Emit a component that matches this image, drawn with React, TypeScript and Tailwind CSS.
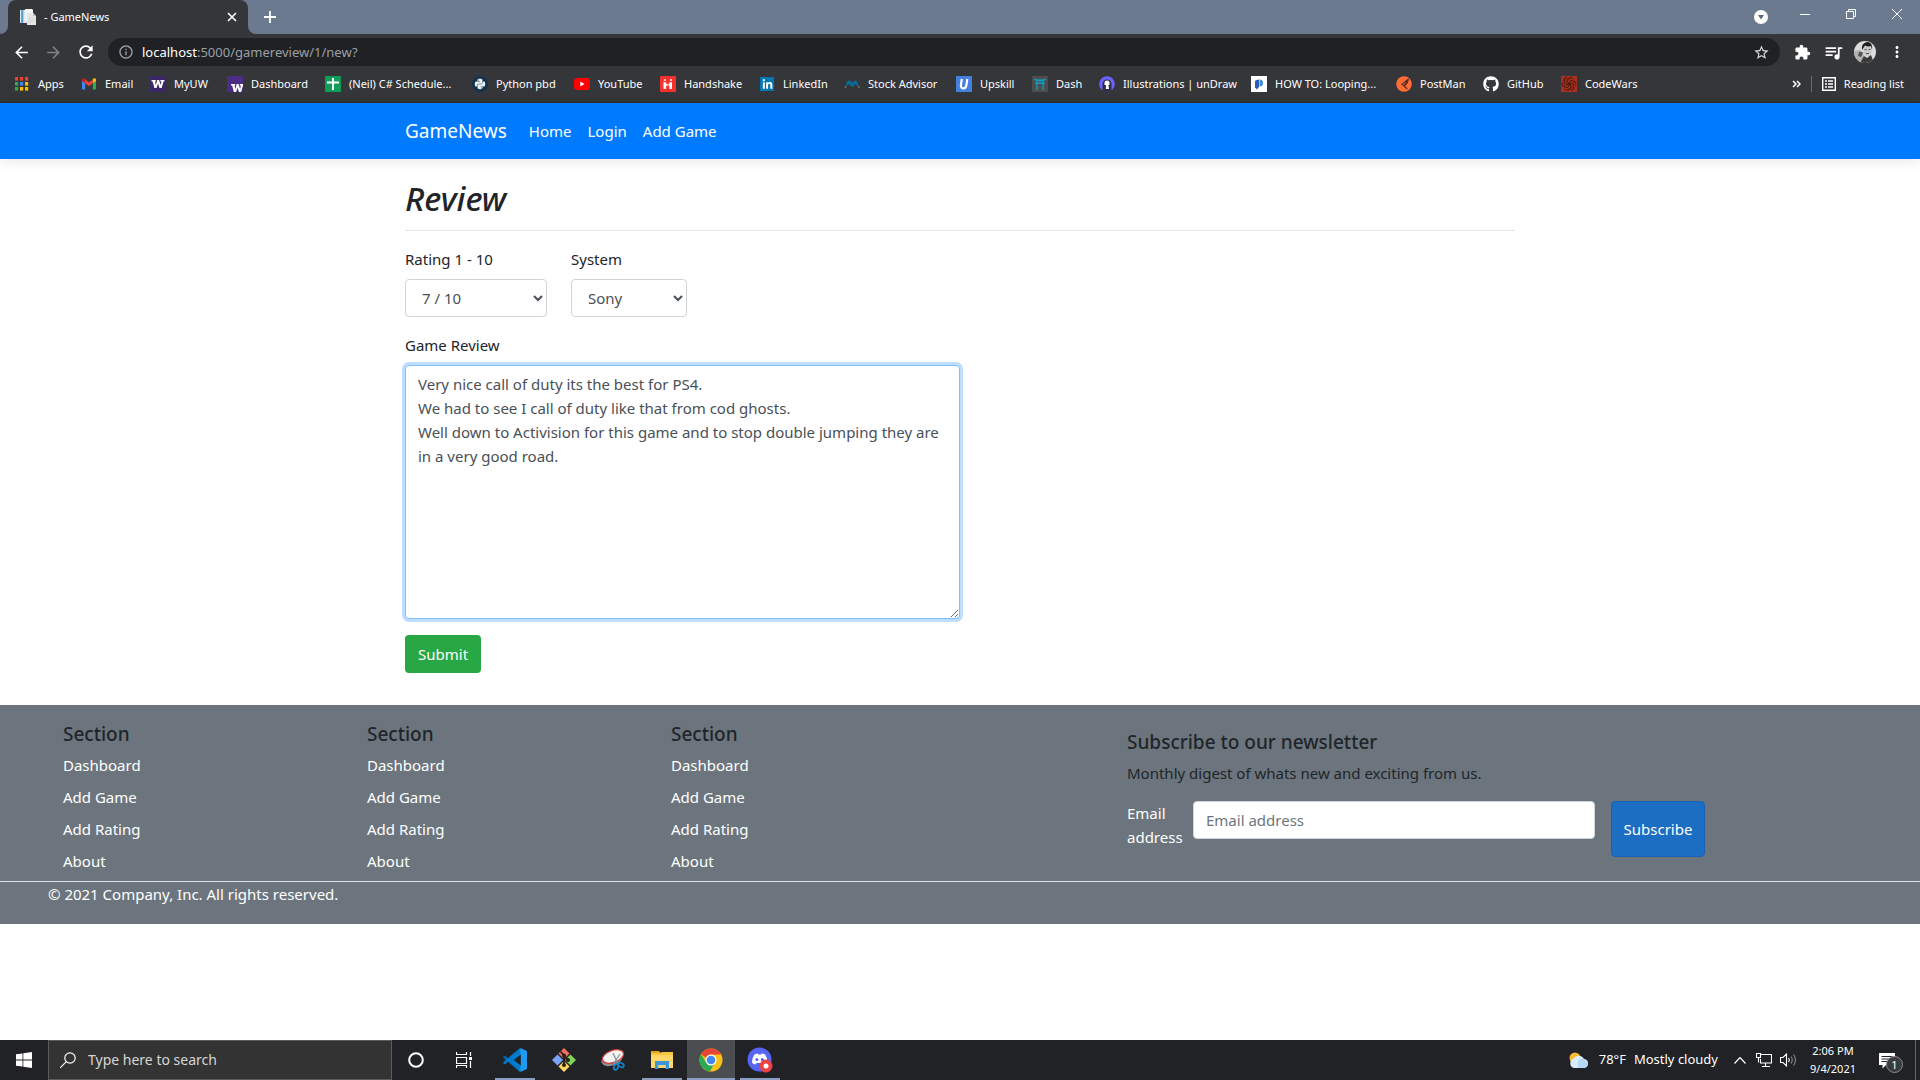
import React from "react";
import { FaGithub, FaLinkedinIn, FaPython } from "react-icons/fa";
import {
  MdArrowBack,
  MdArrowForward,
  MdExtension,
  MdMoreVert,
  MdOutlineInfo,
  MdQueueMusic,
  MdRefresh,
  MdStarOutline,
} from "react-icons/md";

function FaviconPages() {
  return (
    <svg viewBox="0 0 16 16" className="size-4" aria-hidden="true">
      <path d="M0 1h7v13H0z" fill="#dfe9f2" />
      <path d="M1 1h2.400v13H1z" fill="#5ba3d9" />
      <path d="M5 0h7l1 1v10H5z" fill="#f4f4f2" />
      <path d="M7 4h6l3 3v9H7z" fill="#e6e6e4" />
      <path d="M13 4v3h3z" fill="#bfc3c6" />
      <path d="M8.500 9h6M8.500 11h6M8.500 13h6" stroke="#c8cccf" strokeWidth=".7" />
    </svg>
  );
}

function AppsIcon() {
  const colors = ["#ea4335", "#ea4335", "#ea4335", "#34a853", "#4285f4", "#fbbc04", "#34a853", "#fbbc04", "#fbbc04"];
  return (
    <svg viewBox="0 0 16 16" className="size-4" aria-hidden="true">
      {colors.map((c, i) => (
        <rect key={i} x={1 + (i % 3) * 5} y={1 + Math.floor(i / 3) * 5} width="3.200" height="3.600" fill={c} />
      ))}
    </svg>
  );
}

function GmailIcon() {
  return (
    <svg viewBox="0 0 16 16" className="size-4" aria-hidden="true">
      <path d="M1 4v8.500a1 1 0 0 0 1 1h2.200V6.500z" fill="#4285f4" />
      <path d="M15 4v8.500a1 1 0 0 1-1 1h-2.200V6.500z" fill="#34a853" />
      <path d="M11.800 3.600v3.700L15 5V3.700c0-1.300-1.400-1.900-2.400-1.100z" fill="#fbbc04" />
      <path d="M4.200 3.600v3.700L1 5V3.700c0-1.300 1.400-1.900 2.400-1.100z" fill="#c5221f" />
      <path d="M4.200 7.300V3.400L8 6.200l3.800-2.800v3.900L8 10.200z" fill="#ea4335" />
    </svg>
  );
}

function BlockW({ low = false }: { low?: boolean }) {
  return (
    <svg viewBox="0 0 16 16" className="size-4" aria-hidden="true">
      <rect width="16" height="16" fill={low ? "#4b2e83" : "#3a2765"} />
      <path
        transform={low ? "translate(2.500 4)" : undefined}
        d="M1.500 4h4.300v1.500H5l.9 3.600L7.200 4h1.900l1.500 5.100.8-3.600h-1V4h4v1.500h-.9L11.600 12H9.500L8 7.600 6.600 12H4.400L2.600 5.500H1.500z"
        fill="#fff"
      />
    </svg>
  );
}

function SheetsIcon() {
  return (
    <svg viewBox="0 0 16 16" className="size-4" aria-hidden="true">
      <rect width="16" height="16" rx="1" fill="#0f9d58" />
      <path d="M2 5.500h12v2H9V14H7V7.500H2zM7 2h2v4H7z" fill="#fff" />
    </svg>
  );
}

function PythonIcon() {
  return (
    <span className="flex size-4 items-center justify-center rounded-full bg-[#12334d] text-[#e8f1f5]">
      <FaPython size={12} />
    </span>
  );
}

function YouTubeIcon() {
  return (
    <svg viewBox="0 0 16 16" className="size-4" aria-hidden="true">
      <rect y="2" width="16" height="12" rx="3" fill="#f00" />
      <path d="M6.300 5.500 10.500 8l-4.200 2.500z" fill="#fff" />
    </svg>
  );
}

function HandshakeIcon() {
  return (
    <svg viewBox="0 0 16 16" className="size-4" aria-hidden="true">
      <rect width="16" height="16" rx="1" fill="#f5312e" />
      <path d="M3.500 6.200h2.600v1.600h1.600v1.900H6.100v3.300H3.500zM9.400 6.200H12V13H9.400V9.700H8.500V7.800h.9z" fill="#fff" />
      <path d="M3.800 3h2v2h-2zM10 3h2v2h-2z" fill="#ffd0cf" />
    </svg>
  );
}

function LinkedInIcon() {
  return (
    <span className="flex size-4 items-center justify-center">
      <span className="flex size-3.5 items-center justify-center bg-[#0077b5] text-white">
        <FaLinkedinIn size={11} />
      </span>
    </span>
  );
}

function StockIcon() {
  return (
    <svg viewBox="0 0 16 16" className="size-4" aria-hidden="true">
      <path d="M1 11C2.500 9 2.500 4.500 5 4.500c1.800 0 2.200 2 3.400 2C9.500 6.500 9.700 4.500 11.500 4.500c2.300 0 2.300 4 3.500 6.500-2-.5-2.800-2-3.400-3.500C10.800 9.500 9.800 10.500 8.500 10.500S6.200 9.500 5.300 8z" fill="#0d6c96" />
      <circle cx="1.500" cy="11" r=".9" fill="#8a6a4a" />
      <circle cx="15" cy="11" r=".9" fill="#8a6a4a" />
    </svg>
  );
}

function UpskillIcon() {
  return (
    <svg viewBox="0 0 16 16" className="size-4" aria-hidden="true">
      <rect width="16" height="16" fill="#4680df" />
      <path d="M5.800 3 4.900 9.200c-.5 4.300 4.900 4.300 5.500 0L11.300 3" fill="none" stroke="#fff" strokeWidth="2.200" />
    </svg>
  );
}

function DashIcon() {
  return (
    <svg viewBox="0 0 16 16" className="size-4" aria-hidden="true">
      <rect width="16" height="16" fill="#4d4d4d" />
      <path d="M2 3.500q6 1.500 12 0M3 7.300h10M5 4v10M11 4v10M8 4v3" fill="none" stroke="#0e9fc2" strokeWidth="1.300" />
    </svg>
  );
}

function UndrawIcon() {
  return (
    <svg viewBox="0 0 16 16" className="size-4" aria-hidden="true">
      <circle cx="8" cy="8" r="7.800" fill="#6c63ff" />
      <path d="M3.500 15V8a4.500 4.500 0 0 1 9 0v7q-4.500 2-9 0z" fill="#2f2e41" />
      <path d="M5.500 6.500q0-2 2.500-2t2.500 2V9h-1l.5 4H6.800L7 9H5.500z" fill="#fff" />
    </svg>
  );
}

function HowToIcon() {
  return (
    <svg viewBox="0 0 16 16" className="size-4" aria-hidden="true">
      <rect width="16" height="16" fill="#fff" />
      <path d="M4 5q1-1.500 4-1.500V11l-2 2.500-2-2z" fill="#2a5db0" />
      <path d="M8.500 3.500H9q3 0 3 3.500t-3.500 3.500z" fill="#3d8fd6" />
    </svg>
  );
}

function PostmanIcon() {
  return (
    <svg viewBox="0 0 16 16" className="size-4" aria-hidden="true">
      <circle cx="8" cy="8" r="7.800" fill="#ff6c37" />
      <path d="M12.500 3 6 8.200l2 1.800zM6 8.200 8.200 10l3 3M12.500 3l-1.300 4L8.200 10" fill="none" stroke="#5a2a1a" strokeWidth="1.100" />
    </svg>
  );
}

function CodewarsIcon() {
  return (
    <svg viewBox="0 0 16 16" className="size-4" aria-hidden="true">
      <rect width="16" height="16" fill="#a8301f" />
      <g fill="none" stroke="#4a1a14" strokeWidth="1">
        {[0, 60, 120, 180, 240, 300].map((a) => (
          <path key={a} transform={`rotate(${a} 8 8)`} d="M8 8q-.5-3 2-3.500t3 2M8 2q3-1 4.500 1" />
        ))}
      </g>
    </svg>
  );
}

const bookmarks = [
  { label: "Apps", icon: <AppsIcon />, width: "w-[67px]" },
  { label: "Email", icon: <GmailIcon />, width: "w-[69px]" },
  { label: "MyUW", icon: <BlockW />, width: "w-[77px]" },
  { label: "Dashboard", icon: <BlockW low />, width: "w-[98px]" },
  { label: "(Neil) C# Schedule...", icon: <SheetsIcon />, width: "w-[147px]" },
  { label: "Python pbd", icon: <PythonIcon />, width: "w-[102px]" },
  { label: "YouTube", icon: <YouTubeIcon />, width: "w-[86px]" },
  { label: "Handshake", icon: <HandshakeIcon />, width: "w-[99px]" },
  { label: "LinkedIn", icon: <LinkedInIcon />, width: "w-[85px]" },
  { label: "Stock Advisor", icon: <StockIcon />, width: "w-[112px]" },
  { label: "Upskill", icon: <UpskillIcon />, width: "w-[76px]" },
  { label: "Dash", icon: <DashIcon />, width: "w-[67px]" },
  { label: "Illustrations | unDraw", icon: <UndrawIcon />, width: "w-[152px]" },
  { label: "HOW TO: Looping...", icon: <HowToIcon />, width: "w-[145px]" },
  { label: "PostMan", icon: <PostmanIcon />, width: "w-[87px]" },
  { label: "GitHub", icon: <FaGithub className="size-4" />, width: "w-[78px]" },
  { label: "CodeWars", icon: <CodewarsIcon />, width: "w-[90px]" },
];

function Avatar() {
  return (
    <svg viewBox="0 0 22 22" className="size-[22px] rounded-full" aria-hidden="true">
      <rect width="22" height="22" fill="#dcdcdc" />
      <path d="M0 10 6 9l3 3 1 4-5 6H0z" fill="#b0b0b0" />
      <path d="M5 11q3-1 4 1l-2 4-3-1z" fill="#555" />
      <path d="M9 5h8l.5 6q-1 4.500-4 4.500T9.500 11z" fill="#c9c9c9" />
      <path d="M8 9Q7 2 13 1q6 0 5 8l-1-4q-3 1-6-.5z" fill="#1e1e1e" />
      <path d="m6 22 4-7 3 2 4-3 3 8z" fill="#3a3a3a" />
      <path d="M10.500 8.500h2M14.500 8.500h2M12 12.500h3" stroke="#444" strokeWidth=".9" />
    </svg>
  );
}

function BrowserChrome() {
  return (
    <header className="border-b border-[#28292c] bg-[#35363a] text-white">
      <div className="flex h-[34px] items-stretch bg-[#6b7a8f]">
        <div className="flex w-2 shrink-0 bg-[#35363a]">
          <span className="flex-1 rounded-br-lg bg-[#6b7a8f]" />
        </div>
        <div className="flex w-60 items-center rounded-t-lg bg-[#35363a] pr-2 pl-3">
          <FaviconPages />
          <span className="ml-2 flex-1 text-[11px]">- GameNews</span>
          <button aria-label="Close tab" className="flex size-4 items-center justify-center">
            <svg viewBox="0 0 10 10" className="size-2.5">
              <path d="m1 1 8 8M9 1 1 9" stroke="#fff" strokeWidth="1.600" />
            </svg>
          </button>
        </div>
        <div className="flex w-2 shrink-0 bg-[#35363a]">
          <span className="flex-1 rounded-bl-lg bg-[#6b7a8f]" />
        </div>
        <button aria-label="New tab" className="ml-1 flex w-5 items-center justify-center">
          <svg viewBox="0 0 12 12" className="size-3">
            <path d="M6 0v12M0 6h12" stroke="#fff" strokeWidth="1.800" />
          </svg>
        </button>
        <div className="ml-auto flex items-start">
          <button aria-label="Search tabs" className="mt-2.5 mr-3.5">
            <svg viewBox="0 0 14 14" className="size-3.5">
              <circle cx="7" cy="7" r="7" fill="#fff" />
              <path d="M4 5h6L7 9.500z" fill="#5b6a7f" />
            </svg>
          </button>
          <button aria-label="Minimize" className="flex h-7 w-[46px] items-center justify-center">
            <svg viewBox="0 0 10 10" className="size-2.5">
              <path d="M0 5.500h10" stroke="#fff" />
            </svg>
          </button>
          <button aria-label="Restore" className="flex h-7 w-[46px] items-center justify-center">
            <svg viewBox="0 0 10 10" className="size-2.5">
              <path d="M.5 2.500h7v7h-7zM2.500 2.500v-2h7v7h-2" fill="none" stroke="#fff" />
            </svg>
          </button>
          <button aria-label="Close" className="flex h-7 w-[46px] items-center justify-center">
            <svg viewBox="0 0 10 10" className="size-2.5">
              <path d="m0 0 10 10M10 0 0 10" stroke="#fff" />
            </svg>
          </button>
        </div>
      </div>
      <div className="flex h-9 items-center">
        <nav aria-label="History" className="flex w-[108px] items-center gap-[13px] pl-3">
          <button aria-label="Back"><MdArrowBack size={19} /></button>
          <button aria-label="Forward"><MdArrowForward size={19} color="#828387" /></button>
          <button aria-label="Reload"><MdRefresh size={20} /></button>
        </nav>
        <div className="flex h-7 flex-1 items-center rounded-full bg-[#202124] pr-2.5 pl-2.5">
          <MdOutlineInfo size={16} color="#9aa0a6" />
          <span className="ml-2 flex-1 pt-0.5 text-[13px] text-[#9aa0a6]">
            <span className="text-white">localhost</span>:5000/gamereview/1/new?
          </span>
          <button aria-label="Bookmark this page"><MdStarOutline size={17} color="#dadce0" /></button>
        </div>
        <div className="flex w-[140px] items-center pl-3.5">
          <button aria-label="Extensions"><MdExtension size={17} /></button>
          <button aria-label="Media" className="ml-3"><MdQueueMusic size={21} /></button>
          <button aria-label="Profile" className="ml-2.5"><Avatar /></button>
          <button aria-label="Menu" className="ml-3"><MdMoreVert size={18} /></button>
        </div>
      </div>
      <nav aria-label="Bookmarks" className="flex h-8 items-center pb-1 pl-3.5 text-[11px]">
        {bookmarks.map((b) => (
          <a key={b.label} href="#" className={`flex shrink-0 items-center gap-2 whitespace-nowrap ${b.width}`}>
            {b.icon}
            {b.label}
          </a>
        ))}
        <div className="ml-auto flex items-center pr-4">
          <button aria-label="More bookmarks">
            <svg viewBox="0 0 9 8" className="h-2 w-[9px]">
              <path d="m1 1 3 3-3 3M5 1l3 3-3 3" fill="none" stroke="#fff" strokeWidth="1.500" />
            </svg>
          </button>
          <span className="mx-2.5 h-4 w-px bg-[#6a6b6e]" />
          <button className="flex items-center gap-2">
            <svg viewBox="0 0 14 14" className="size-3.5" aria-hidden="true">
              <path d="M.7.7h12.600v12.600H.7z" fill="none" stroke="#fff" strokeWidth="1.400" />
              <path d="M3 4h2M6 4h5M3 7h2M6 7h5M3 10h2M6 10h5" stroke="#fff" strokeWidth="1.500" />
            </svg>
            Reading list
          </button>
        </div>
      </nav>
    </header>
  );
}

function SiteNav() {
  return (
    <nav className="bg-[#007bff] text-white shadow-[0_2px_12px_rgba(0,0,0,0.1)]">
      <div className="mx-auto flex h-14 max-w-[1140px] items-center px-[15px]">
        <a href="#" className="mr-3.5 text-[19px]">GameNews</a>
        {["Home", "Login", "Add Game"].map((l) => (
          <a key={l} href="#" className="px-2 text-[15px]">{l}</a>
        ))}
      </div>
    </nav>
  );
}

const review = `Very nice call of duty its the best for PS4.
We had to see I call of duty like that from cod ghosts.
Well down to Activision for this game and to stop double jumping they are in a very good road.`;

const field = "rounded border bg-white px-3 text-[15px] leading-6 text-[#495057]";

function ReviewForm() {
  return (
    <main className="mx-auto w-full max-w-[1140px] px-[15px] pt-5 text-[15px] leading-6 text-[#212529]">
      <h1 className="mb-3 text-[33px] leading-[39px] font-medium italic">Review</h1>
      <hr className="mb-4 border-black/10" />
      <form onSubmit={(e) => e.preventDefault()}>
        <div className="mb-4 flex gap-6">
          <div>
            <label htmlFor="rating" className="mb-2 block">Rating 1 - 10</label>
            <select id="rating" defaultValue="7" className={`${field} h-[38px] w-[142px] border-[#ced4da]`}>
              {[1, 2, 3, 4, 5, 6, 7, 8, 9, 10].map((n) => (
                <option key={n} value={n}>{n} / 10</option>
              ))}
            </select>
          </div>
          <div>
            <label htmlFor="system" className="mb-2 block">System</label>
            <select id="system" defaultValue="Sony" className={`${field} h-[38px] w-[116px] border-[#ced4da]`}>
              <option>Sony</option>
              <option>Microsoft</option>
              <option>Nintendo</option>
            </select>
          </div>
        </div>
        <label htmlFor="review" className="mb-2 block">Game Review</label>
        <textarea
          id="review"
          rows={10}
          defaultValue={review}
          className={`${field} block w-1/2 resize border-[#80bdff] py-1.5 ring-3 ring-[#007bff]/25 outline-none`}
        />
        <button className="mt-4 mb-8 h-[38px] rounded bg-[#28a745] px-[13px] text-[15px] text-white">Submit</button>
      </form>
    </main>
  );
}

function SiteFooter() {
  return (
    <footer className="bg-[#6c757d] text-[15px] leading-6 text-white">
      <div className="grid grid-cols-12 px-12 pt-4">
        {[0, 1, 2].map((i) => (
          <section key={i} className="col-span-2 px-[15px]">
            <h2 className="mb-1.5 text-[19px] leading-[26px] font-medium text-[#212529]">Section</h2>
            <ul className="mb-2 flex flex-col gap-2">
              {["Dashboard", "Add Game", "Add Rating", "About"].map((l) => (
                <li key={l}><a href="#">{l}</a></li>
              ))}
            </ul>
          </section>
        ))}
        <form onSubmit={(e) => e.preventDefault()} className="col-span-4 col-start-8 px-[15px] pt-2">
          <h2 className="mb-1.5 text-[19px] leading-[26px] font-medium text-[#212529]">Subscribe to our newsletter</h2>
          <p className="mb-4 text-[#212529]">Monthly digest of whats new and exciting from us.</p>
          <div className="flex">
            <label htmlFor="email" className="w-[66px]">Email address</label>
            <input
              id="email"
              type="email"
              placeholder="Email address"
              className={`${field} h-[38px] min-w-0 flex-1 border-[#ced4da] placeholder:text-[#6c757d]`}
            />
            <button className="ml-4 h-14 w-[94px] rounded border border-[#1862b5] bg-[#1b6ec2]">Subscribe</button>
          </div>
        </form>
      </div>
      <div className="border-t border-[#dee2e6] px-12 pb-[18px]">
        <p>© 2021 Company, Inc. All rights reserved.</p>
      </div>
    </footer>
  );
}

function VsCodeIcon() {
  return (
    <svg viewBox="0 0 24 24" className="size-6" aria-hidden="true">
      <path d="M17 0 5.600 10.500 2 7.700.4 8.500v1.600L17.300 24l1-5z" fill="#0065a9" />
      <path d="M17 24 5.600 13.500 2 16.300.4 15.500v-1.600L17.300 0l1 5z" fill="#007acc" />
      <path d="m17.300 0 6.700 3v18l-6.700 3z" fill="#1f9cf0" />
      <path d="m17.800 6.500-7 5.500 7 5.500z" fill="#202226" />
    </svg>
  );
}

function GitIcon() {
  return (
    <svg viewBox="0 0 24 24" className="size-6" aria-hidden="true">
      <path d="m12 0 5.500 5.500L12 11 6.500 5.500z" fill="#f3705f" />
      <path d="m5.500 6.500 5.500 5.500-5.500 5.500L0 12z" fill="#7aa5f7" />
      <path d="m18.500 6.500 5.500 5.500-5.500 5.500L13 12z" fill="#7fd35a" />
      <path d="m12 13 5.500 5.500L12 24l-5.500-5.500z" fill="#ffd75e" />
      <path d="M8.500 3.500 12 7.500v10M12 8l4 4" stroke="#2c1f1b" strokeWidth="1.800" fill="none" />
      <circle cx="12" cy="7.500" r="2" fill="#2c1f1b" />
      <circle cx="16" cy="12" r="2" fill="#2c1f1b" />
      <circle cx="12" cy="17" r="2" fill="#2c1f1b" />
    </svg>
  );
}

function SnipIcon() {
  return (
    <svg viewBox="0 0 24 24" className="size-6" aria-hidden="true">
      <ellipse cx="11" cy="11" rx="11" ry="6.500" transform="rotate(-20 11 11)" fill="#8d8d90" />
      <ellipse cx="12" cy="8.500" rx="11" ry="6" transform="rotate(-20 12 8.500)" fill="#f4f4f4" stroke="#d23b3b" strokeWidth="1.200" />
      <path d="m12 5 5 11M19 6l-6 9" stroke="#8a929b" strokeWidth="1.300" />
      <ellipse cx="15" cy="19" rx="2" ry="3" transform="rotate(25 15 19)" fill="none" stroke="#1583c9" strokeWidth="1.700" />
      <ellipse cx="20" cy="17" rx="3" ry="2" transform="rotate(25 20 17)" fill="none" stroke="#1583c9" strokeWidth="1.700" />
    </svg>
  );
}

function FolderIcon() {
  return (
    <svg viewBox="0 0 24 24" className="size-6" aria-hidden="true">
      <path d="M1 3h8l2 2.500H1z" fill="#e8a317" />
      <path d="M1 5h22v15H1z" fill="#ffd768" />
      <path d="M1 5h9l2-1h11v3H1z" fill="#f7c53c" />
      <path d="M5 21v-8h14v8h-3.500v-4h-7v4z" fill="#3c96dc" />
      <path d="M8.500 17h7v3h-7z" fill="#f4d77b" />
    </svg>
  );
}

function ChromeIcon() {
  return (
    <svg viewBox="0 0 24 24" className="size-6" aria-hidden="true">
      <circle cx="12" cy="12" r="11.500" fill="#fbc116" />
      <path d="M2 6.200A11.500 11.500 0 0 1 22 6.500H12a5.500 5.500 0 0 0-5 3.200z" fill="#ea4335" />
      <path d="M2 6.200A11.500 11.500 0 0 0 10.800 23.500l5-8.500-8.600-.2z" fill="#2da94f" />
      <circle cx="12" cy="12" r="5.500" fill="#fff" />
      <circle cx="12" cy="12" r="4.300" fill="#4285f4" />
    </svg>
  );
}

function DiscordIcon() {
  return (
    <svg viewBox="0 0 26 26" className="size-[26px]" aria-hidden="true">
      <circle cx="12.500" cy="12.500" r="12" fill="#5865f2" />
      <path d="M7.500 7.500q2-1 3.300-1l.6 1h2.700l.5-1q2 0 3.500 1 2.600 4 2.200 8.500-1.800 1.300-3.500 1.600l-.8-1.500h-6.500l-.9 1.500q-2-.4-3.400-1.600Q4.600 11.500 7.500 7.500z" fill="#fff" />
      <circle cx="9.900" cy="12.500" r="1.500" fill="#5865f2" />
      <circle cx="15.300" cy="12.500" r="1.500" fill="#5865f2" />
      <circle cx="19" cy="19" r="6.500" fill="#ed4245" />
      <circle cx="19" cy="19" r="2.500" fill="#fff" />
    </svg>
  );
}

const taskApps = [
  { name: "Visual Studio Code", icon: <VsCodeIcon />, bar: true, active: false },
  { name: "Git Bash", icon: <GitIcon />, bar: false, active: false },
  { name: "Snipping Tool", icon: <SnipIcon />, bar: false, active: false },
  { name: "File Explorer", icon: <FolderIcon />, bar: true, active: false },
  { name: "Google Chrome", icon: <ChromeIcon />, bar: true, active: true },
  { name: "Discord", icon: <DiscordIcon />, bar: true, active: false },
];

function Taskbar() {
  return (
    <footer className="flex h-10 items-stretch bg-[#202226] text-white">
      <button aria-label="Start" className="flex w-12 items-center justify-center">
        <svg viewBox="0 0 16 16" className="size-4">
          <path d="M0 2.300 6.500 1.400v6.200H0zM7.300 1.300 16 0v7.600H7.300zM0 8.400h6.500v6.200L0 13.700zM7.300 8.400H16V16l-8.700-1.300z" fill="#fff" />
        </svg>
      </button>
      <label className="flex w-[344px] items-center border border-[#5c5c5c] bg-[#333] pl-[11px]">
        <svg viewBox="0 0 16 16" className="size-4" aria-hidden="true">
          <circle cx="10" cy="6" r="5.200" fill="none" stroke="#fff" strokeWidth="1.200" />
          <path d="M6.300 9.700 0 16" stroke="#fff" strokeWidth="1.200" />
        </svg>
        <input
          type="text"
          aria-label="Search"
          placeholder="Type here to search"
          className="ml-3 min-w-0 flex-1 bg-transparent text-sm placeholder:text-[#d6d6d6]"
        />
      </label>
      <button aria-label="Cortana" className="flex w-12 items-center justify-center">
        <svg viewBox="0 0 16 16" className="size-4">
          <circle cx="8" cy="8" r="6.800" fill="none" stroke="#fff" strokeWidth="2" />
        </svg>
      </button>
      <button aria-label="Task view" className="mr-[3px] flex w-12 items-center justify-center">
        <svg viewBox="0 0 16 16" className="size-4">
          <path d="M.5 0v2.500h10V0M.5 5.500h10v6H.5zM.5 16v-2.500h10V16M14.500 0v4M14.500 9v7" fill="none" stroke="#fff" strokeWidth="1.200" />
          <path d="M13 5h3v3h-3z" fill="#fff" />
        </svg>
      </button>
      <div className="flex gap-px">
        {taskApps.map((a) => (
          <button
            key={a.name}
            aria-label={a.name}
            className={`flex w-12 flex-col items-center ${a.active ? "bg-[#4b4d50]" : ""}`}
          >
            <span className="flex flex-1 items-center pt-0.5">{a.icon}</span>
            <span className={`h-0.5 ${a.active ? "w-full" : "w-10"} ${a.bar ? "bg-[#8b9dc3]" : ""}`} />
          </button>
        ))}
      </div>
      <div className="ml-auto flex items-center text-[13px]">
        <svg viewBox="0 0 20 16" className="h-4 w-5" aria-hidden="true">
          <circle cx="6" cy="6" r="5.500" fill="#f9b934" />
          <path d="M5 16a5 5 0 0 1-.5-9.500A6 6 0 0 1 15 7a4.600 4.600 0 0 1 .5 9z" fill="#d9ecfb" />
          <path d="M9 9a5 5 0 0 1 6-2 4.600 4.600 0 0 1 .5 9H9z" fill="#b5d9f5" />
        </svg>
        <span className="ml-2.5">78°F</span>
        <span className="ml-2">Mostly cloudy</span>
        <svg viewBox="0 0 12 7" className="ml-4 h-[7px] w-3" aria-hidden="true">
          <path d="m.5 6.500 5.500-6 5.500 6" fill="none" stroke="#fff" strokeWidth="1.200" />
        </svg>
        <svg viewBox="0 0 16 14" className="ml-2.5 h-3.5 w-4" aria-hidden="true">
          <path d="M5 1.500h10.500v8.500H4.500V6M9.500 10v3M6 13.500h8M.5.500h4v4h-4zM2.500 4.500v5" fill="none" stroke="#fff" strokeWidth="1.100" />
        </svg>
        <svg viewBox="0 0 17 14" className="ml-2 h-3.5 w-[17px]" aria-hidden="true">
          <path d="M.5 4.500H3L6.500 1v12L3 9.500H.5zM8.500 5q1.500 2 0 4" fill="none" stroke="#fff" strokeWidth="1.100" />
          <path d="M11 3.500q2.500 3.500 0 7M13.500 1.500q4 5.500 0 11" fill="none" stroke="#85878a" strokeWidth="1.100" />
        </svg>
        <div className="ml-1 flex w-16 flex-col items-center text-[11px] leading-[18px]">
          <span>2:06 PM</span>
          <span>9/4/2021</span>
        </div>
        <button aria-label="Notifications, 1 new" className="relative ml-2.5 h-6 w-8">
          <svg viewBox="0 0 16 16" className="mt-0.5 ml-1 size-4">
            <path d="M0 0h16v12H7l-3.500 3.500V12H0z" fill="#fff" />
            <path d="M2.500 3.500h11M2.500 6h11M2.500 8.500h7" stroke="#202226" />
          </svg>
          <span className="absolute top-2 right-1 flex size-[17px] items-center justify-center rounded-full border border-[#8a8a8a] bg-[#3a3b3d] text-[11px] leading-none">
            1
          </span>
        </button>
        <span className="ml-2 h-10 w-px bg-[#66686b]" />
        <span className="w-1" />
      </div>
    </footer>
  );
}

export default function App() {
  return (
    <div className="flex min-h-screen flex-col bg-white font-['Noto_Sans',sans-serif]">
      <BrowserChrome />
      <div className="flex-1">
        <SiteNav />
        <ReviewForm />
        <SiteFooter />
      </div>
      <Taskbar />
    </div>
  );
}
